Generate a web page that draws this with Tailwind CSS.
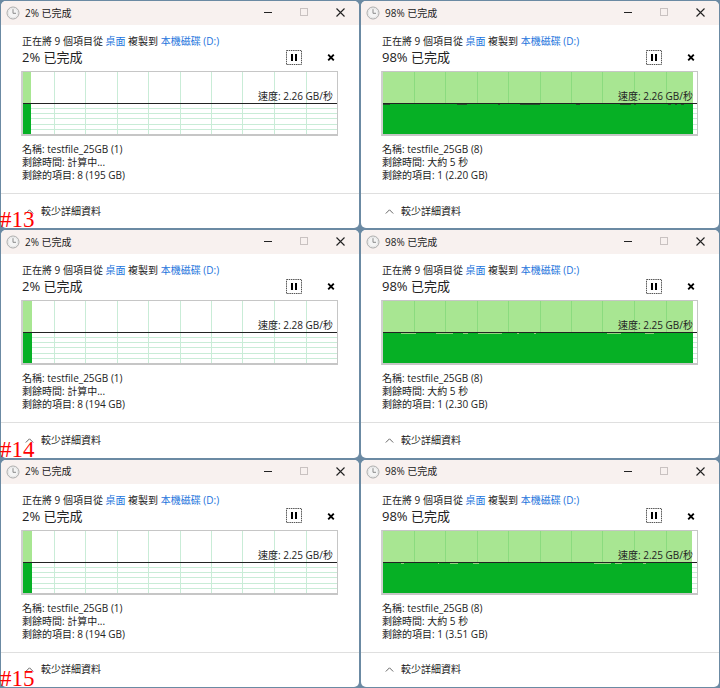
<!DOCTYPE html>
<html lang="zh-Hant">
<head>
    <meta charset="UTF-8">
    <meta name="viewport" content="width=device-width, initial-scale=1.0">
    <title>檔案複製測試</title>
    <script src="https://cdn.jsdelivr.net/npm/@tailwindcss/browser@4"></script>
</head>
<body class="bg-[#6b8aa3] font-['Open_Sans','Noto_Sans_CJK_TC',sans-serif] text-[10px] text-[#222]">
    <main id="daftar" class="grid grid-cols-2 auto-rows-fr min-h-screen"></main>

    <script>
        // dips: [x, width] of the small notches under the speed line
        const windows = [
            { label: '#13', percent: 2, file: 1, time: '計算中...', left: '8 (195 GB)', speed: '2.26', fill: 8, dips: [] },
            { percent: 98, file: 8, time: '大約 5 秒', left: '1 (2.20 GB)', speed: '2.26', fill: 310, dipColor: '#24502a',
              dips: [[0, 7], [74, 10], [115, 2], [137, 20], [193, 4], [237, 11], [251, 2], [285, 3], [292, 2], [298, 3]] },
            { label: '#14', percent: 2, file: 1, time: '計算中...', left: '8 (194 GB)', speed: '2.28', fill: 9, dips: [] },
            { percent: 98, file: 8, time: '大約 5 秒', left: '1 (2.30 GB)', speed: '2.25', fill: 310, dipColor: '#8fd67c',
              dips: [[18, 15], [53, 17], [80, 5], [95, 24], [134, 2], [151, 2], [224, 14], [262, 9]] },
            { label: '#15', percent: 2, file: 1, time: '計算中...', left: '8 (194 GB)', speed: '2.25', fill: 9, dips: [] },
            { percent: 98, file: 8, time: '大約 5 秒', left: '1 (3.51 GB)', speed: '2.25', fill: 309, dipColor: '#8fd67c',
              dips: [[18, 3], [55, 1], [67, 8], [90, 6], [211, 17], [232, 7], [260, 3]] },
        ];

        const columns = [31, 62, 94, 125, 157, 188, 219, 251, 283];
        const rows = [36, 41, 46, 52, 57];

        function chart(w) {
            const verticals = columns.map(x => `<rect x="${x}" width="1" height="62" fill="#c9ecd7"/>`).join('');
            const horizontals = rows.map(y => `<rect y="${y}" width="314" height="1" fill="#c9ecd7"/>`).join('');
            const shades = columns.filter(x => x < w.fill).map(x => `<rect x="${x}" width="1" height="31" fill="#8bdb7f"/>`).join('');
            const dips = w.dips.map(d => `<rect x="${d[0]}" y="32" width="${d[1]}" height="1" fill="${w.dipColor}"/>`).join('');
            return `
                <svg class="block w-full h-full" viewBox="0 0 314 62" preserveAspectRatio="none" shape-rendering="crispEdges">
                    ${verticals}${horizontals}
                    <rect width="${w.fill}" height="31" fill="#a8e692"/>
                    ${shades}
                    <rect y="31" width="${w.fill}" height="31" fill="#06b025"/>
                    ${dips}
                    <rect y="31" width="314" height="1" fill="#222"/>
                </svg>`;
        }

        document.getElementById('daftar').innerHTML = windows.map(w => `
            <div class="relative p-px">
                <section class="h-full bg-white rounded-[5px] overflow-hidden">
                    <header class="flex items-center h-6 pl-[5px] pr-3 bg-[#f8f1ef]">
                        <svg class="w-[14px] h-[14px]" viewBox="0 0 14 14" fill="none">
                            <circle cx="7" cy="7" r="6" fill="#f4f4f4" stroke="#aaa"/>
                            <circle cx="7" cy="7" r="4.8" stroke="#dcdcdc" stroke-width=".6"/>
                            <path d="M7 3.2V7.3H10" stroke="#8a8a8a"/>
                        </svg>
                        <h2 class="ml-[5px] flex-1">${w.percent}% 已完成</h2>
                        <div class="flex gap-[22px]">
                            <button class="w-[14px] h-[14px]" aria-label="最小化">
                                <svg class="w-full h-full" viewBox="0 0 14 14"><path d="M3 6.5H11" stroke="#222"/></svg>
                            </button>
                            <button class="w-[14px] h-[14px]" aria-label="最大化" disabled>
                                <svg class="w-full h-full" viewBox="0 0 14 14"><rect x="3.5" y="2.5" width="7" height="7" fill="none" stroke="#c9c2c1"/></svg>
                            </button>
                            <button class="w-[14px] h-[14px]" aria-label="關閉">
                                <svg class="w-full h-full" viewBox="0 0 14 14"><path d="M3.5 2.5L11.5 10.5M11.5 2.5L3.5 10.5" stroke="#222" stroke-width="1.1"/></svg>
                            </button>
                        </div>
                    </header>

                    <div class="pl-5 pr-[21px] pt-2">
                        <p class="pl-px leading-4 whitespace-nowrap">正在將 9 個項目從 <a href="#" class="text-[#1a73dc]">桌面</a> 複製到 <a href="#" class="text-[#1a73dc]">本機磁碟 (D:)</a></p>
                        <div class="flex items-center h-4 pl-px">
                            <h3 class="flex-1 text-[13px] leading-4">${w.percent}% 已完成</h3>
                            <div class="flex gap-[22px] items-center">
                                <button class="w-4 h-[15px]" aria-label="暫停">
                                    <svg class="w-full h-full" viewBox="0 0 16 15">
                                        <rect x=".5" y=".5" width="15" height="14" fill="none" stroke="#555" stroke-dasharray="1.5 .7"/>
                                        <path d="M6 4V11M10 4V11" stroke="#000" stroke-width="2"/>
                                    </svg>
                                </button>
                                <button class="w-[14px] h-[14px]" aria-label="取消">
                                    <svg class="w-full h-full" viewBox="0 0 14 14"><path d="M4.2 4.7L9.8 10.3M9.8 4.7L4.2 10.3" stroke="#000" stroke-width="1.9"/></svg>
                                </button>
                            </div>
                        </div>

                        <div class="relative mt-[6px] h-[65px] border border-[#c6c6c6] border-l-2 border-l-[#cfcfcf] border-b-2">
                            ${chart(w)}
                            <span class="absolute right-1 top-[17px] leading-[14px]">速度: ${w.speed} GB/秒</span>
                        </div>

                        <div class="mt-[7px] pl-px leading-[13px]">
                            <p>名稱: testfile_25GB (${w.file})</p>
                            <p>剩餘時間: ${w.time}</p>
                            <p>剩餘的項目: ${w.left}</p>
                        </div>
                    </div>

                    <footer class="mt-[11px] h-[35px] border-t border-[#dfdfdf] px-6 flex items-center">
                        <button class="flex items-center gap-[7px]">
                            <svg class="w-[9px] h-[9px]" viewBox="0 0 9 9" fill="none"><path d="M.8 6.5L4.5 2.8L8.2 6.5" stroke="#666"/></svg>
                            較少詳細資料
                        </button>
                    </footer>
                </section>
                ${w.label ? `<span class="absolute left-0 bottom-0 font-['Liberation_Serif',serif] text-[23px] leading-[18px] text-[#f00]">${w.label}</span>` : ''}
            </div>
        `).join('');
    </script>
</body>
</html>
